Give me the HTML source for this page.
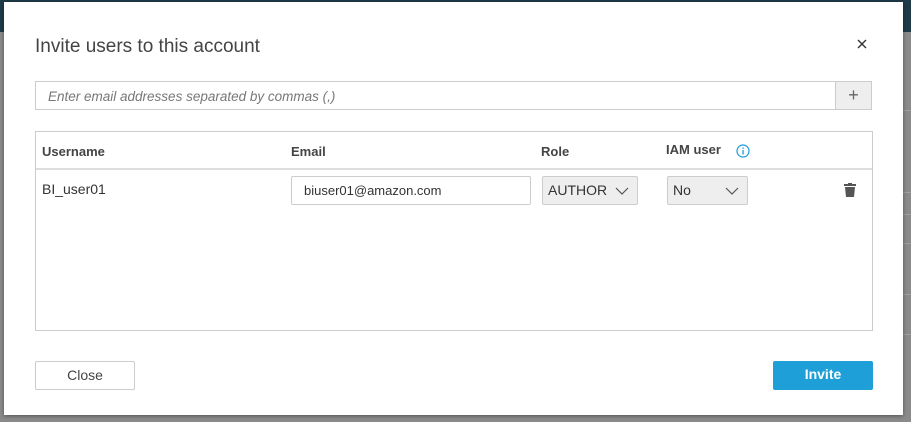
<!DOCTYPE html>
<html><head><style>
body{margin:0;width:911px;height:422px;overflow:hidden;background:#8a8a8a;font-family:"Liberation Sans",sans-serif;position:relative}
.top{position:absolute;left:0;top:0;width:911px;height:32px;background:#1f3b47}
.bgline{position:absolute;left:903px;width:8px;height:1px;background:#a0a0a0}
.modal{position:absolute;left:4px;top:2px;width:899px;height:413px;background:#fff;box-shadow:0 1px 4px rgba(0,0,0,.4)}
.abs{position:absolute}
h1{position:absolute;left:31px;top:34px;margin:0;font-weight:normal;font-size:19px;color:#444}
.inp{left:31px;top:79px;width:837px;height:29px;border:1px solid #ccc;box-sizing:border-box}
.inp i{position:absolute;left:12px;top:7px;font-size:13.5px;color:#777}
.plus{position:absolute;right:0;top:0;width:35px;height:27px;background:#eee;border-left:1px solid #ccc;text-align:center;line-height:27px;color:#666;font-size:18px}
.tbl{left:31px;top:129px;width:838px;height:200px;border:1px solid #ccc;box-sizing:border-box}
.th{position:absolute;top:12px;font-weight:bold;font-size:13px;color:#444}
.sep{position:absolute;left:0;right:0;top:36px;height:2px;background:#ddd}
.sel{position:absolute;top:44px;height:29px;background:#eee;border:1px solid #ccc;box-sizing:border-box;font-size:14px;color:#333;line-height:27px;padding-left:5px;border-radius:2px}
.sel svg{position:absolute;right:8px;top:10px}
.btn{position:absolute;top:359px;height:29px;box-sizing:border-box;text-align:center;line-height:27px;font-size:14px;border-radius:2px}
</style></head><body>
<div class="top"></div>
<div class="bgline" style="top:110px"></div><div class="bgline" style="top:192px"></div><div class="bgline" style="top:214px"></div><div class="bgline" style="top:243px"></div><div class="bgline" style="top:294px"></div><div class="bgline" style="top:334px"></div>
<div class="modal">
<h1>Invite users to this account</h1>
<svg class="abs" style="left:853px;top:37px" width="10" height="10" viewBox="0 0 10 10"><path d="M1 1l8 8M9 1l-8 8" stroke="#333" stroke-width="1.4"/></svg>
<div class="abs inp"><i>Enter email addresses separated by commas (,)</i><div class="plus">+</div></div>
<div class="abs tbl">
<div class="th" style="left:6px">Username</div>
<div class="th" style="left:255px">Email</div>
<div class="th" style="left:505px">Role</div>
<div class="th" style="left:630px;top:10px">IAM user</div>
<svg class="abs" style="left:700px;top:12px" width="14" height="14" viewBox="0 0 14 14"><circle cx="7" cy="7" r="6" fill="none" stroke="#1a9bdc" stroke-width="1.2"/><rect x="6.4" y="6" width="1.3" height="4.5" fill="#1a9bdc"/><rect x="6.4" y="3.5" width="1.3" height="1.4" fill="#1a9bdc"/></svg>
<div class="sep"></div>
<div class="abs" style="left:6px;top:49px;font-size:14px;color:#333">BI_user01</div>
<div class="abs" style="left:255px;top:44px;width:240px;height:29px;border:1px solid #ccc;box-sizing:border-box;font-size:13px;color:#333;line-height:27px;padding-left:12px;border-radius:2px">biuser01@amazon.com</div>
<div class="sel" style="left:506px;width:96px">AUTHOR<svg width="14" height="8" viewBox="0 0 14 8"><path d="M1 1l6 6 6-6" fill="none" stroke="#555" stroke-width="1.2"/></svg></div>
<div class="sel" style="left:631px;width:81px">No<svg width="14" height="8" viewBox="0 0 14 8"><path d="M1 1l6 6 6-6" fill="none" stroke="#555" stroke-width="1.2"/></svg></div>
<svg class="abs" style="left:808px;top:51px" width="12" height="14" viewBox="0 0 12 14"><rect x="0" y="1" width="12" height="2" fill="#555"/><rect x="4" y="0" width="4" height="2" fill="#555"/><path d="M1 4h10l-1 10H2z" fill="#555"/></svg>
</div>
<div class="btn" style="left:31px;width:100px;border:1px solid #ccc;color:#444">Close</div>
<div class="btn" style="left:769px;width:100px;background:#1f9fd8;color:#fff;font-weight:bold">Invite</div>
</div>
</body></html>
